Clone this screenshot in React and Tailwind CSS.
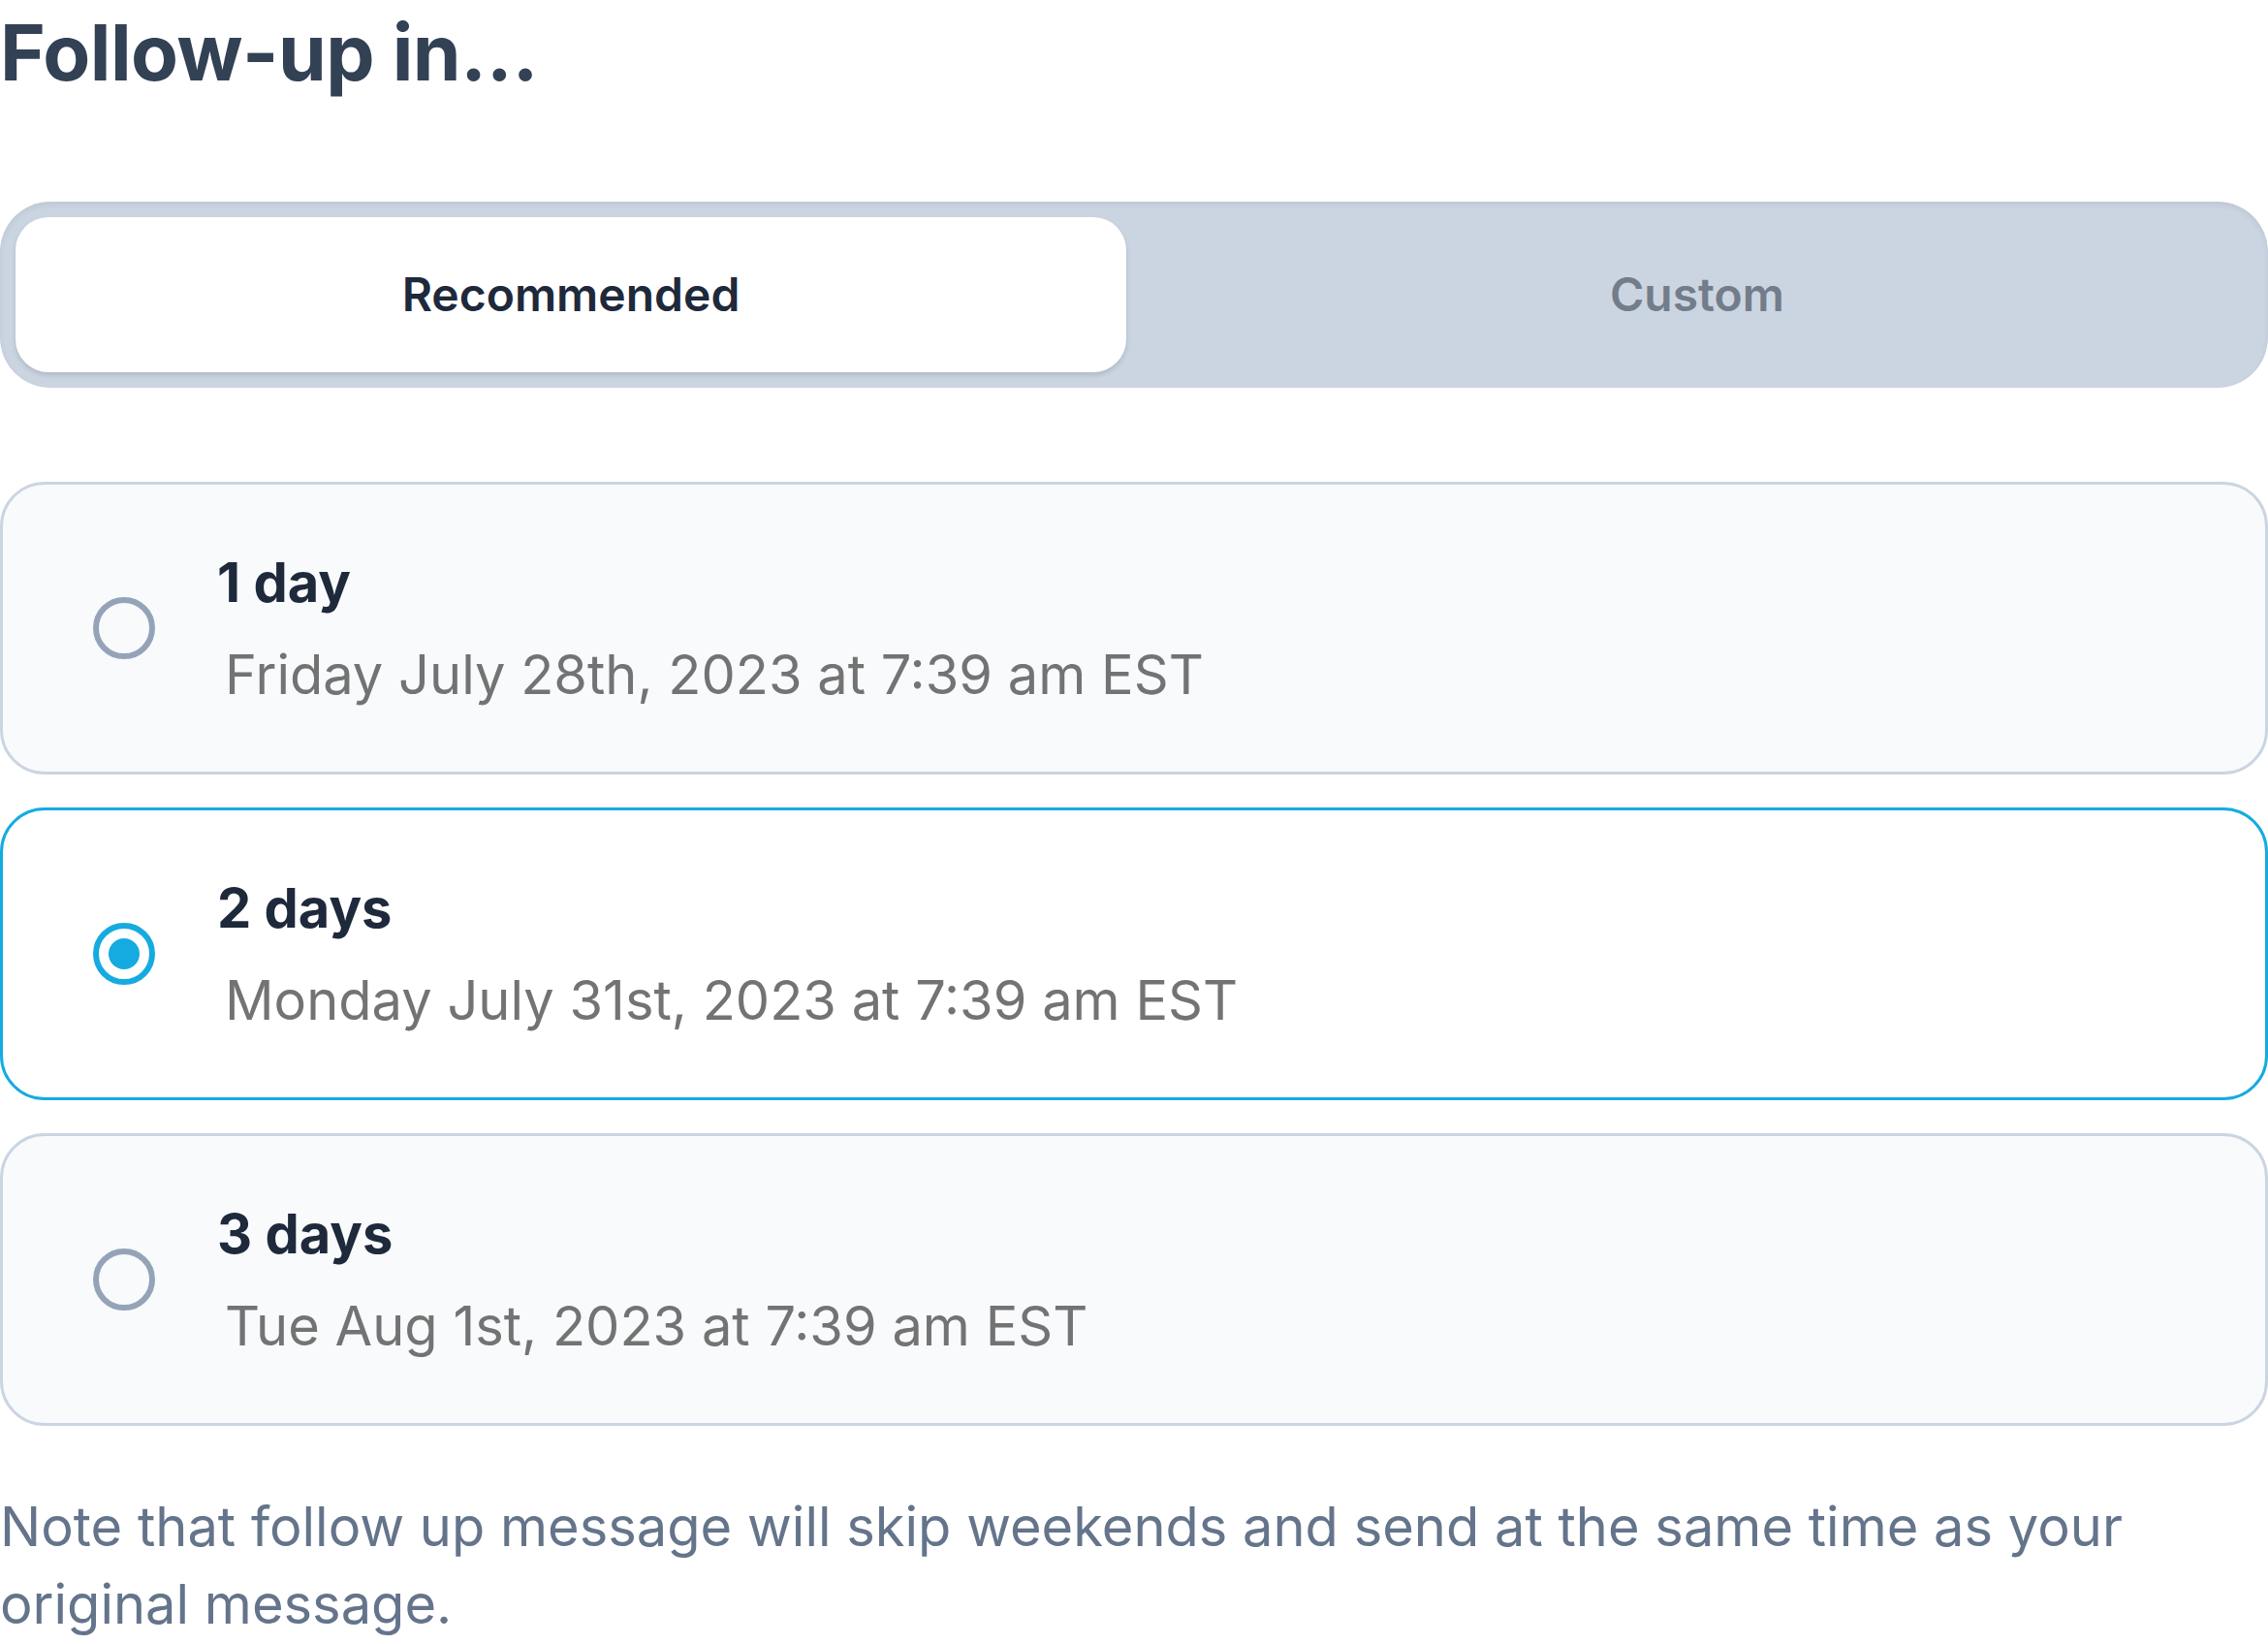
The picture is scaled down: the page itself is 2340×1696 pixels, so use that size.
const options = [
  { id: 1, label: '1 day', date: 'Friday July 28th, 2023 at 7:39 am EST' },
  { id: 2, label: '2 days', date: 'Monday July 31st, 2023 at 7:39 am EST' },
  { id: 3, label: '3 days', date: 'Tue Aug 1st, 2023 at 7:39 am EST' },
];

function Radio({ checked }) {
  if (checked) {
    return (
      <div className="w-[64px] h-[64px] shrink-0 rounded-full border-[6px] border-[#15abe0] flex items-center justify-center">
        <div className="w-[32px] h-[32px] rounded-full bg-[#15abe0]" />
      </div>
    );
  }
  return <div className="w-[64px] h-[64px] shrink-0 rounded-full border-[6px] border-[#94a3b8]" />;
}

export default function App() {
  const selected = 2;

  return (
    <div className="w-[2340px] bg-white font-['Inter',sans-serif]">
      <h1 className="text-[80px] leading-[108px] font-bold tracking-[-0.5px] text-[#334155]">Follow-up in…</h1>

      {/* Tabs */}
      <div className="mt-[100px] h-[192px] rounded-[52px] bg-[#cbd5e1] p-[16px] flex gap-[16px] shadow-[inset_0_3px_6px_rgba(15,23,42,0.07)]">
        <button className="flex-1 rounded-[34px] bg-white text-[48px] font-semibold text-[#1e293b] shadow-[0_3px_5px_rgba(15,23,42,0.14)]">
          Recommended
        </button>
        <button className="flex-1 text-[48px] font-semibold text-[#737c8a]">Custom</button>
      </div>

      {/* Options */}
      <div className="mt-[97px] flex flex-col gap-[34px]">
        {options.map((o) => {
          const active = o.id === selected;
          return (
            <div
              key={o.id}
              className={
                active
                  ? 'h-[302px] rounded-[46px] border-[3px] border-[#15abe0] bg-white flex items-center pl-[93px]'
                  : 'h-[302px] rounded-[46px] border-[3px] border-[#cbd5e1] bg-[#f8fafc] flex items-center pl-[93px]'
              }
            >
              <Radio checked={active} />
              <div className="ml-[64px] flex flex-col">
                <span className="text-[56px] leading-[68px] font-bold text-[#1e293b]">{o.label}</span>
                <span className="mt-[27px] pl-2 text-[56px] leading-[68px] text-[#737373]">{o.date}</span>
              </div>
            </div>
          );
        })}
      </div>

      <p className="mt-[64px] text-[56px] leading-[80px] text-[#64748b]">
        Note that follow up message will skip weekends and send at the same time as your original message.
      </p>
    </div>
  );
}
